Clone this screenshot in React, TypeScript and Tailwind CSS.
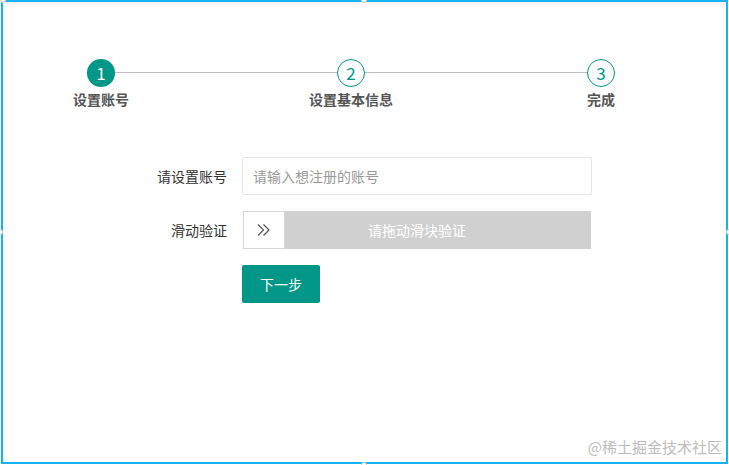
import React from "react";

const steps = [
  { n: 1, label: "设置账号", active: true },
  { n: 2, label: "设置基本信息", active: false },
  { n: 3, label: "完成", active: false },
];

function Step({ n, label, active }: { n: number; label: string; active: boolean }) {
  return (
    <div className="flex w-[28px] flex-col items-center">
      <div
        className={
          active
            ? "flex h-[28px] w-[28px] items-center justify-center rounded-full bg-[#009688] text-[17px] text-white"
            : "flex h-[28px] w-[28px] items-center justify-center rounded-full border border-[#009688] bg-white text-[17px] text-[#009688]"
        }
      >
        {n}
      </div>
      <div className="mt-[2px] whitespace-nowrap text-[14px] font-bold leading-[20px] text-[#555]">
        {label}
      </div>
    </div>
  );
}

export default function App() {
  return (
    <div
      className="relative h-[465px] w-[729px] bg-white px-[1px] pb-[1px]"
      style={{ fontFamily: '"Noto Sans CJK SC", "Noto Sans", sans-serif' }}
    >
      <div className="h-full w-full border-2 border-[#14b4f2] bg-white shadow-[inset_0_5px_5px_-3px_rgba(0,0,0,0.07)]">
        {/* steps */}
        <div className="ml-[84px] mr-[111px] mt-[57px] flex items-start">
          <Step {...steps[0]} />
          <div className="mt-[13px] h-px flex-1 bg-[#bdbdbd]" />
          <Step {...steps[1]} />
          <div className="mt-[13px] h-px flex-1 bg-[#bdbdbd]" />
          <Step {...steps[2]} />
        </div>

        {/* form */}
        <div className="mt-[48px] flex flex-col gap-[16px]">
          <div className="flex items-center">
            <label className="w-[224px] text-right text-[14px] text-[#333]">请设置账号</label>
            <input
              className="ml-[15px] h-[38px] w-[350px] rounded-[2px] border border-[#e6e6e6] px-[10px] text-[14px] text-[#333] outline-none placeholder:text-[#999]"
              placeholder="请输入想注册的账号"
            />
          </div>
          <div className="flex items-center">
            <label className="w-[224px] text-right text-[14px] text-[#333]">滑动验证</label>
            <div className="ml-[16px] flex h-[38px] w-[348px] items-stretch bg-[#d0d0d0]">
              <div className="flex w-[42px] items-center justify-center border border-[#d6d6d6] bg-white">
                <svg width="16" height="16" viewBox="0 0 16 16" fill="none" stroke="#555" strokeWidth="1.2">
                  <path d="M2 2.5l5.5 5.5-5.5 5.5" />
                  <path d="M7.5 2.5l5.5 5.5-5.5 5.5" />
                </svg>
              </div>
              <div className="flex flex-1 items-center justify-center pr-[42px] text-[14px] text-white">
                请拖动滑块验证
              </div>
            </div>
          </div>
          <div className="flex">
            <button className="ml-[239px] h-[38px] w-[78px] rounded-[2px] bg-[#009688] text-[14px] text-white">
              下一步
            </button>
          </div>
        </div>
      </div>

      {/* watermark */}
      <div className="absolute bottom-[7px] right-[7px] text-[15px] text-[#bcbcbc]">@稀土掘金技术社区</div>

      {/* selection handles */}
      <div className="absolute left-[0px] top-[-3px] h-[6px] w-[6px] rounded-full border border-[#ccc] bg-white" />
      <div className="absolute left-[361px] top-[-3px] h-[6px] w-[6px] rounded-full border border-[#ccc] bg-white" />
      <div className="absolute left-[361px] bottom-[-3px] h-[6px] w-[6px] rounded-full border border-[#ccc] bg-white" />
      <div className="absolute left-[-3px] top-[229px] h-[6px] w-[6px] rounded-full border border-[#ccc] bg-white" />
      <div className="absolute right-[-3px] top-[229px] h-[6px] w-[6px] rounded-full border border-[#ccc] bg-white" />
    </div>
  );
}
